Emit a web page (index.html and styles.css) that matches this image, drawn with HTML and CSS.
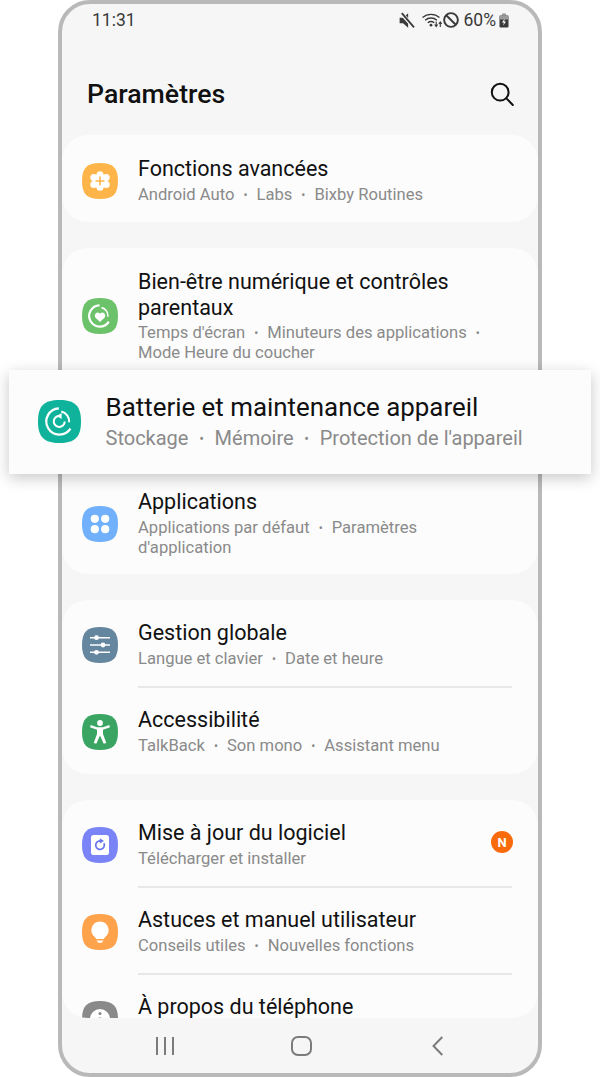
FILE: index.html
```html
<!DOCTYPE html>
<html lang="fr">
<head>
<meta charset="utf-8">
<title>Paramètres</title>
<link rel="stylesheet" href="styles.css">
</head>
<body>
<div class="phone">
  <div class="status">
    <span class="time">11:31</span>
    <div class="status-right">
      <svg class="st-mute" viewBox="1 .5 14 15"><path d="M1.5 5.5h3L9 1.5v13l-4.5-4h-3z" fill="#3a3a3a"/><path d="M3 1.5l11 12.5" stroke="#f6f6f6" stroke-width="3.4"/><path d="M3.4 1.5l10.8 12.5" stroke="#3a3a3a" stroke-width="1.6"/></svg>
      <svg class="st-wifi" viewBox="0 0 21 16"><g fill="none" stroke="#3a3a3a" stroke-width="1.4"><path d="M1 5.5a13 13 0 0 1 17 0"/><path d="M3.6 8.2a9.2 9.2 0 0 1 11.8 0"/><path d="M6.2 10.8a5.4 5.4 0 0 1 6.6 0"/></g><circle cx="9.5" cy="13.2" r="1.4" fill="#3a3a3a"/><path d="M14.7 9.5v4.5M13.2 12.5l1.5 2 1.5-2M18.8 15v-4.5M17.3 12l1.5-2 1.5 2" fill="none" stroke="#3a3a3a" stroke-width="1.1"/></svg>
      <svg class="st-dnd" viewBox="1 1 14 14"><circle cx="8" cy="8" r="6" fill="none" stroke="#3a3a3a" stroke-width="1.7"/><path d="M3.8 3.8l8.4 8.4" stroke="#3a3a3a" stroke-width="1.7"/></svg>
      <span class="pct">60%</span>
      <svg class="st-bat" viewBox="0 0 10 15"><path d="M3 .5h4v2H3z" fill="#9a9a9a"/><rect x=".5" y="2.5" width="9" height="12" rx="1.2" fill="#3a3a3a"/><rect x=".5" y="2.5" width="9" height="4" fill="#9a9a9a"/><path d="M5.8 5.5L3 9.6h1.9L4.2 12.5 7 8.4H5.1z" fill="#fff"/></svg>
    </div>
  </div>

  <header class="head">
    <h1 class="head-title">Paramètres</h1>
    <svg class="search" viewBox="0 0 24 24"><circle cx="10.2" cy="10.2" r="8.4" fill="none" stroke="#111" stroke-width="2"/><path d="M16.4 16.4l6.4 6.6" stroke="#111" stroke-width="2" stroke-linecap="round"/></svg>
  </header>

  <main class="list">
    <section class="card">
      <div class="row row-low">
        <svg class="ico" viewBox="0 0 36 36"><path fill="#fdb54a" d="M18 0C31 0 36 5 36 18S31 36 18 36 0 31 0 18 5 0 18 0z"/><g fill="#fff"><circle cx="18" cy="11.8" r="3.5"/><circle cx="18" cy="24.2" r="3.5"/><circle cx="11.8" cy="14.6" r="3.5"/><circle cx="24.2" cy="14.6" r="3.5"/><circle cx="11.8" cy="21.4" r="3.5"/><circle cx="24.2" cy="21.4" r="3.5"/><circle cx="18" cy="18" r="7.2"/></g><path d="M18 13.5v9M13.5 18h9" stroke="#fdb54a" stroke-width="1.6"/></svg>
        <div class="txt">
          <div class="t">Fonctions avancées</div>
          <div class="s">Android Auto<span class="dot">•</span>Labs<span class="dot">•</span>Bixby Routines</div>
        </div>
      </div>
    </section>

    <section class="card">
      <div class="row row-wrap">
        <svg class="ico" viewBox="0 0 36 36"><path fill="#6cc26a" d="M18 0C31 0 36 5 36 18S31 36 18 36 0 31 0 18 5 0 18 0z"/><path d="M26.8 23.6A10.6 10.6 0 1 1 17.5 7.4" fill="none" stroke="#fff" stroke-width="2.2"/><path d="M19.5 9.6a8.4 8.4 0 0 1 6.4 9" fill="none" stroke="#fff" stroke-width="1.6"/><path d="M18 24l-4.7-4.5a3 3 0 0 1 4.2-4.2l.5.5.5-.5a3 3 0 0 1 4.2 4.2z" fill="#fff"/></svg>
        <div class="txt">
          <div class="t">Bien-être numérique et contrôles parentaux</div>
          <div class="s">Temps d'écran<span class="dot">•</span>Minuteurs des applications<span class="dot">•</span> Mode Heure du coucher</div>
        </div>
      </div>
      <div class="covered"></div>
      <div class="row row-low row-end">
        <svg class="ico" viewBox="0 0 36 36"><path fill="#71b1fb" d="M18 0C31 0 36 5 36 18S31 36 18 36 0 31 0 18 5 0 18 0z"/><g fill="#fff"><circle cx="12.8" cy="12.8" r="4.1"/><circle cx="23.2" cy="12.8" r="4.1"/><circle cx="12.8" cy="23.2" r="4.1"/><circle cx="23.2" cy="23.2" r="4.1"/></g></svg>
        <div class="txt">
          <div class="t">Applications</div>
          <div class="s">Applications par défaut<span class="dot">•</span>Paramètres d'application</div>
        </div>
      </div>
    </section>

    <section class="card">
      <div class="row">
        <svg class="ico" viewBox="0 0 36 36"><path fill="#64869f" d="M18 0C31 0 36 5 36 18S31 36 18 36 0 31 0 18 5 0 18 0z"/><path d="M8 10.7h20M8 18h20M8 25.3h20" stroke="#fff" stroke-width="1.5"/><circle cx="14.5" cy="10.7" r="2.4" fill="#fff"/><circle cx="21" cy="18" r="2.4" fill="#fff"/><circle cx="14.5" cy="25.3" r="2.4" fill="#fff"/></svg>
        <div class="txt">
          <div class="t">Gestion globale</div>
          <div class="s">Langue et clavier<span class="dot">•</span>Date et heure</div>
        </div>
      </div>
      <div class="row row-div">
        <svg class="ico" viewBox="0 0 36 36"><path fill="#3aa563" d="M18 0C31 0 36 5 36 18S31 36 18 36 0 31 0 18 5 0 18 0z"/><circle cx="18" cy="9" r="2.9" fill="#fff"/><path d="M8 13.2l7 2.6v4.2L11.7 29l2.6.8L18 21.5l3.7 8.3 2.6-.8L21 20v-4.2l7-2.6-.8-2.2-6.2 2.2h-6l-6.2-2.2z" fill="#fff"/></svg>
        <div class="txt">
          <div class="t">Accessibilité</div>
          <div class="s">TalkBack<span class="dot">•</span>Son mono<span class="dot">•</span>Assistant menu</div>
        </div>
      </div>
    </section>

    <section class="card">
      <div class="row">
        <svg class="ico" viewBox="0 0 36 36"><path fill="#7a84f6" d="M18 0C31 0 36 5 36 18S31 36 18 36 0 31 0 18 5 0 18 0z"/><rect x="9" y="8" width="18" height="20" rx="2.8" fill="#fff"/><path d="M21.9 16.2a4.3 4.3 0 1 1-3.6-2.4" fill="none" stroke="#6a75f0" stroke-width="1.7"/><path d="M17.8 11.2l4.2 2.8-4.2 2.4z" fill="#6a75f0"/></svg>
        <div class="txt">
          <div class="t">Mise à jour du logiciel</div>
          <div class="s">Télécharger et installer</div>
        </div>
        <span class="badge">N</span>
      </div>
      <div class="row row-div">
        <svg class="ico" viewBox="0 0 36 36"><path fill="#ffa24c" d="M18 0C31 0 36 5 36 18S31 36 18 36 0 31 0 18 5 0 18 0z"/><path d="M18 7.5a8.6 8.6 0 0 1 5.2 15.4c-.8.7-1.2 1.2-1.2 2H14c0-.8-.4-1.3-1.2-2A8.6 8.6 0 0 1 18 7.5z" fill="#fff"/><path d="M14.5 26.6h7l-1.6 2.2h-3.8z" fill="#fff"/></svg>
        <div class="txt">
          <div class="t">Astuces et manuel utilisateur</div>
          <div class="s">Conseils utiles<span class="dot">•</span>Nouvelles fonctions</div>
        </div>
      </div>
      <div class="row row-div">
        <svg class="ico" viewBox="0 0 36 36"><path fill="#8a8a8a" d="M18 0C31 0 36 5 36 18S31 36 18 36 0 31 0 18 5 0 18 0z"/><circle cx="18" cy="18" r="10" fill="#fff"/><circle cx="18" cy="12.5" r="1.5" fill="#8a8a8a"/><path d="M18 16.5v8" stroke="#8a8a8a" stroke-width="2.4"/></svg>
        <div class="txt">
          <div class="t">À propos du téléphone</div>
        </div>
      </div>
    </section>
  </main>

  <nav class="nav">
    <svg class="nav-recents" viewBox="0 0 18 18"><path d="M1 0v18M9 0v18M17 0v18" stroke="#7b7b7b" stroke-width="2"/></svg>
    <svg class="nav-home" viewBox="0 0 21 20"><rect x="1" y="1" width="19" height="18" rx="6" fill="none" stroke="#7b7b7b" stroke-width="2"/></svg>
    <svg class="nav-back" viewBox="0 0 11 20"><path d="M10.3 1L1.5 10l8.8 9" fill="none" stroke="#7b7b7b" stroke-width="2"/></svg>
  </nav>
</div>

<div class="focus">
  <svg class="focus-ico" viewBox="0 0 36 36"><path fill="#0fb39b" d="M18 0C31 0 36 5 36 18S31 36 18 36 0 31 0 18 5 0 18 0z"/><path d="M27.2 24A11 11 0 1 1 17.5 7" fill="none" stroke="#fff" stroke-width="1.9"/><path d="M19.5 9.6a8.6 8.6 0 0 1 6.6 9" fill="none" stroke="#fff" stroke-width="1.7"/><path d="M22.4 18a4.6 4.6 0 1 1-3.2-4.4" fill="none" stroke="#fff" stroke-width="1.7"/><path d="M19.8 10.8v5.2l-4-2.6z" fill="#fff"/></svg>
  <div class="focus-txt">
    <div class="focus-t">Batterie et maintenance appareil</div>
    <div class="focus-s">Stockage<span class="focus-dot">•</span>Mémoire<span class="focus-dot">•</span>Protection de l'appareil</div>
  </div>
</div>
</body>
</html>
```
FILE: styles.css
```css
* { box-sizing: border-box; }
html, body { margin: 0; padding: 0; background: #fff; }
body { width: 600px; height: 1077px; overflow: hidden; position: relative; font-family: Roboto, "Liberation Sans", sans-serif; }

.phone {
  width: 484px; height: 1077px; margin-left: 58px;
  border: 4px solid #b9b9b9; border-radius: 32px;
  background: #f6f6f6; display: flex; flex-direction: column; overflow: hidden;
}

.status { height: 32px; flex: none; display: flex; align-items: center; justify-content: space-between; padding: 0 29px 0 30px; color: #3a3a3a; font-size: 17.5px; }
.status-right { display: flex; align-items: center; }
.st-mute { width: 16px; height: 17px; margin-right: 6px; }
.st-wifi { width: 22px; height: 16px; }
.st-dnd { width: 16px; height: 16px; margin-right: 5px; }
.st-bat { width: 10px; height: 15px; margin-left: 3px; }

.head { height: 99px; flex: none; display: flex; align-items: center; justify-content: space-between; padding: 16px 24px 0 25px; }
.head-title { margin: 0; font-size: 26.7px; font-weight: 500; color: #111; }
.search { width: 24px; height: 24px; }

.list { flex: 1; min-height: 0; overflow: hidden; border-radius: 0 0 26px 26px; display: flex; flex-direction: column; gap: 26px; }
.card { flex: none; background: #fcfcfc; border-radius: 26px; }

.row { position: relative; display: flex; align-items: center; padding: 20px 26px 18px 20px; }
.row-low { padding-top: 21px; padding-bottom: 17px; }
.row-end { padding-bottom: 16px; }
.row-wrap { padding-top: 20.5px; padding-bottom: 18.5px; }
.row-wrap .s { margin-top: 2px; }
.row-div::before { content: ""; position: absolute; left: 76px; right: 26px; top: -1px; height: 2px; background: #e8e8e8; }
.ico { width: 36px; height: 36px; flex: none; margin-right: 20px; }
.txt { flex: 1; min-width: 0; min-height: 49px; }
.t { font-size: 21.5px; line-height: 26px; color: #111; }
.s { font-size: 16.6px; line-height: 20px; color: #8a8a8a; margin-top: 3px; }
.dot { font-size: 12px; line-height: 1; margin: 0 9px; position: relative; top: -1px; }

.covered { height: 87px; }
.badge { position: absolute; left: 429px; top: 31px; width: 22px; height: 22px; border-radius: 50%; background: #f96a0c; color: #fff; font-size: 13px; font-weight: 700; display: flex; align-items: center; justify-content: center; }

.nav { height: 55px; flex: none; display: flex; align-items: center; justify-content: space-between; padding: 0 95px 0 94px; }
.nav-recents { width: 18px; height: 18px; }
.nav-home { width: 21px; height: 20px; }
.nav-back { width: 11px; height: 20px; margin-left: 3px; }

.focus { position: absolute; left: 9px; top: 370px; width: 582px; height: 104px; background: #fcfcfc; box-shadow: 0 4px 14px rgba(0,0,0,.22); display: flex; align-items: center; padding: 0 0 2px 29px; }
.focus-ico { width: 43px; height: 43px; flex: none; margin-right: 24.5px; }
.focus-t { font-size: 25.9px; line-height: 30px; color: #111; }
.focus-s { font-size: 20px; line-height: 24px; color: #8a8a8a; margin-top: 4px; }
.focus-dot { font-size: 14px; line-height: 1; margin: 0 10.7px; position: relative; top: -1px; }
```
